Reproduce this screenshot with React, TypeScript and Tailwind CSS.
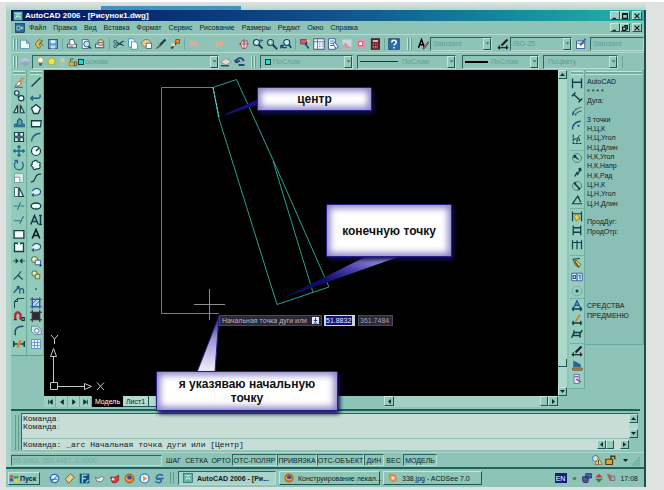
import type { ReactNode } from "react";

const K = "#123f4c";
const N = "#1d3f8c";

/* Every glyph is drawn on a 16 x 16 grid. */
const icons: Record<string, ReactNode> = {
  app: <><rect x="1" y="1" width="14" height="14" fill="#5fb3a8" stroke="#1b5a66" /><path d="M4 12 8 3l4 9M5 9h6M3 4h3M10 4h3" stroke="#e8fff8" /></>,
  doc: <><rect x="1" y="1" width="14" height="14" fill="#1f6c9a" stroke="#123" /><path d="M3 5h5v6H3zM9 8h5M11 5v6" stroke="#e8fff8" /></>,
  fresh: <path d="M2 3h8l4 4v7H2zM10 3v4h4" fill="#eafaff" stroke="#4a86b0" />,
  open: <><path d="M8 2 3 8l4 6 3-2-2-4 5-4z" fill="#f0c040" stroke="#705010" /><path d="m9 5 4 5" stroke={K} /></>,
  save: <><rect x="2" y="2" width="12" height="12" fill="#5f9fcf" stroke="#20486c" /><path d="M5 3h6v4H5z" fill="#eef" /><path d="M5 10h6v4H5z" fill="#cde" /></>,
  print: <><path d="M2 8h12v5H2z" fill="#d8dce8" stroke={K} /><path d="M5 8V2h5l2 6" fill="#fff" stroke="#446" /><path d="M4 11h5" stroke="#c33" /></>,
  preview: <><path d="M3 2h8v12H3z" fill="#fff" stroke="#357" /><circle cx="9" cy="8" r="4" fill="#bfe4f4" stroke={K} /><path d="m11 11 4 3" stroke={K} strokeWidth="2" /></>,
  publish: <><path d="M2 8h11v5H2z" fill="#d8dce8" stroke={K} /><circle cx="9" cy="6" r="4" fill="#f0c968" stroke="#755" /><path d="M5 6h8" stroke="#36a" /></>,
  cut: <><path d="m14 4-9 6M14 10 5 6" stroke={K} strokeWidth="1.6" /><circle cx="3" cy="5" r="2" stroke={K} /><circle cx="3" cy="11" r="2" stroke={K} /></>,
  copy: <><path d="M2 1h6l3 3v8H2z" fill="#eafaff" stroke="#357fb0" /><path d="M6 5h5l3 3v7H6z" fill="#fff" stroke="#357fb0" /></>,
  paste: <><ellipse cx="7" cy="7" rx="6" ry="5" fill="#e8c890" stroke="#765" /><path d="M7 7h7v7H7z" fill="#fff" stroke="#357" /></>,
  brush: <><path d="m14 2-7 7" stroke={K} strokeWidth="3" /><path d="m7 8-5 6 6-4z" fill="#d08a50" stroke="#523" /></>,
  match: <><path d="M9 2h5v5H9z" fill="#e8903c" stroke="#641" /><path d="m9 7-6 7" stroke={N} strokeWidth="2.6" /><path d="M3 7h5v4H3z" fill="#f4dc70" /></>,
  undo: <path d="M4 3v6h6M4 9c3-7 10-3 7 4" stroke="#dcae94" strokeWidth="2.6" />,
  redo: <path d="M12 3v6H6M12 9C9 2 2 6 5 13" stroke="#dcae94" strokeWidth="2.6" />,
  dot: <path d="M6 6h4l-2 3z" fill="#d6a890" />,
  pan: <><path d="M3 8 6 3l3 3 3-3 1 6-3 5H6z" fill="#f6d8d0" stroke="#853a50" /><path d="M8 1v13M1 8h13" stroke="#a02c4c" /></>,
  zoom: <><circle cx="6" cy="6" r="4" fill="#c8ecf4" stroke={K} strokeWidth="1.4" /><path d="m9 9 5 5" stroke={K} strokeWidth="2.4" /><path d="M12 1v5M10 3.500h5" stroke={N} /></>,
  zoomwin: <><circle cx="6" cy="6" r="4" fill="#fff" stroke={K} strokeWidth="1.4" /><path d="M4 4h4v4H4z" stroke="#3a6" /><path d="m9 9 4 4" stroke={K} strokeWidth="2.4" /><path d="M12 15h3v-3z" fill="#000" /></>,
  zoomprev: <><circle cx="9" cy="6" r="4" fill="#c8ecf4" stroke={K} strokeWidth="1.4" /><path d="m12 9 3 4" stroke={K} strokeWidth="2.2" /><path d="M1 10q4 5 8 2M1 10v4M1 10h4" stroke={N} strokeWidth="1.8" /></>,
  props: <><path d="M2 2h8v6H2z" fill="#d05878" stroke="#734" /><path d="m8 7 5 7M12 3l-3 6" stroke={N} strokeWidth="2" /><circle cx="12" cy="4" r="2" fill="#f0d050" /></>,
  center: <><path d="M1 1h14v14H1z" fill="#f4f6ff" stroke={K} /><path d="M6 1v14M1 5h14M8 8h2M12 8h2M8 11h2M12 11h2" stroke="#3c5c90" /></>,
  palette: <><path d="M2 1h9v14H2z" fill="#fff" stroke={N} /><path d="M4 4h5M4 7h5M4 10h5" stroke="#38a" strokeWidth="1.500" /><path d="m10 5 5 7-3 2-4-6z" fill="#e6f4ff" stroke={N} /></>,
  image: <><path d="M2 2h12v12H2z" fill="#c5dbe0" /><path d="m2 10 4-4 4 4 4 3v1H2z" fill="#d49aa6" /></>,
  markup: <><rect x="2" y="2" width="12" height="12" rx="3" fill="#dc96a8" /><path d="M5 5h5v5H5z" fill="#fff" stroke="#c2405c" /></>,
  calc: <><rect x="3" y="1" width="11" height="14" fill="#702028" stroke="#301018" /><path d="M5 3h7v2H5z" fill="#cfe" /><path d="M5 8h7M5 11h7M5 13h7" stroke="#e8b0a8" strokeDasharray="2 1" /></>,
  help: <><rect x="1" y="1" width="14" height="14" fill="#2f6cae" stroke="#123a6a" /><path d="M5 6c0-4 6-4 6 0 0 2-3 2-3 4M8 12v2" stroke="#fff" strokeWidth="2" /></>,
  astyle: <><path d="M2 13 6 2l4 11M4 9h5" stroke="#000" strokeWidth="2" /><path d="m15 5-6 7-1 3 3-2 4-6z" fill="#d09090" stroke="#622" /></>,
  dstyle: <><path d="M1 13h14M3 10v5M13 10v5" stroke="#000" strokeWidth="1.600" /><path d="m14 2-8 8" stroke="#123" strokeWidth="3" /></>,
  tstyle: <><path d="M2 4h11v10H2z" fill="#fff" stroke={N} /><path d="M2 7h11" stroke={N} /><path d="m14 1-7 9" stroke="#36a" strokeWidth="2.600" /></>,
  layers: <><path d="m1 6 7-4 7 4-7 4z" fill="#b8c4dc" /><path d="m1 10 7-4 7 4-7 4z" fill="#8fa0bc" opacity=".7" /></>,
  layprev: <><path d="m1 8 7-5 7 5-7 4z" fill="#e4d8d0" stroke="#8a8a86" /><path d="M1 13h11" stroke="#446" strokeWidth="2" /></>,
  laystate: <path d="M3 9c0-8 9-8 10-2M3 9l-2-4M3 9l5-3M6 12h8" stroke="#2b4678" strokeWidth="2.4" />,
  bulb: <><circle cx="8" cy="6" r="4" fill="#fffbe0" stroke="#b0a048" /><path d="M6 10h4v4H6z" fill="#557" /></>,
  sun: <circle cx="8" cy="8" r="5" fill="#f4e440" stroke="#a89830" />,
  sunbox: <><path d="M3 8h10v6H3z" fill="#a9c4a0" /><circle cx="8" cy="6" r="3" fill="#c8cf9a" /></>,
  lock: <><path d="M2 8h8v6H2z" fill="#d8b838" stroke="#765" /><path d="M4 8V3h5M10 8h4v6h-4z" stroke="#665a20" strokeWidth="1.500" /></>,
  erase: <><path d="m14 2-6 7" stroke="#c89c3c" strokeWidth="3.500" /><path d="m8 7-5 6h5l3-4z" fill="#fff" stroke="#b33b34" /><path d="M2 15h11" stroke={K} /></>,
  copyobj: <><circle cx="5" cy="4" r="3" fill="#d6eef2" stroke={K} strokeWidth="1.500" /><circle cx="7" cy="8" r="2" fill="#2d7fa0" /><circle cx="11" cy="11" r="3.500" fill="#fff" stroke={K} strokeWidth="1.500" /></>,
  mirror: <><path d="M6 3v10H1zM10 3v10h5z" fill="#dceee8" stroke={K} strokeWidth="1.600" /><path d="M8 1v14" stroke="#c14848" strokeDasharray="2 1" /></>,
  offset: <path d="M2 13v-3l4-1V5l3-3 3 3v4l3 1v3zM4 11h9" fill="#5a9fba" stroke="#1d5f7c" strokeWidth="1.500" />,
  array: <path d="M2 2h5v5H2zM9 2h5v5H9zM2 9h5v5H2zM9 9h5v5H9z" fill="#e9f5f1" stroke={K} strokeWidth="1.600" />,
  move: <path d="M8 1v14M1 8h14M6 3l2-2 2 2M6 13l2 2 2-2M3 6 1 8l2 2M13 6l2 2-2 2" stroke="#1d6a86" strokeWidth="1.700" />,
  rotate: <path d="M5 3a6 6 0 1 0 7 1M2 2h4v4" stroke="#1f6c8e" strokeWidth="1.700" />,
  scale: <><path d="M2 2h12v12H2z" fill="#d8e8e6" stroke="#6f9c9c" /><path d="M2 7h7v7H2z" fill="#fff" stroke="#688" /></>,
  stretch: <><path d="M2 2h5v12H2z" fill="#fff" stroke={K} /><path d="m8 2 6 12H8z" fill="#e6f4f2" stroke={K} strokeWidth="1.500" /></>,
  trim: <path d="M1 8h5M10 8h5M10 3 6 13" stroke="#2f7689" strokeWidth="1.500" />,
  extend: <path d="M1 9h9M14 3 9 13" stroke="#2f7689" strokeWidth="1.500" />,
  rect2: <path d="M1.500 3.500h13v10h-13z" fill="#f4fbfa" stroke={K} strokeWidth="1.800" />,
  brk: <><path d="M6 3H2v11h12V3h-4" fill="#f4fbfa" stroke={K} strokeWidth="1.800" /><path d="M6 2v3M10 2v3" stroke={K} /></>,
  join: <path d="M0 8h6M16 8h-6M4 5l3 3-3 3zM12 5 9 8l3 3z" stroke={K} fill={K} />,
  chamfer: <path d="m1 14 5-5 5-6M8 6v3M7 9l6 5M6 9h3" stroke="#1d5366" strokeWidth="1.500" />,
  divide: <path d="m1 13 7-8M5 5h3v3M9 14V9q3-3 5 0v5" stroke="#1c5c80" strokeWidth="1.700" />,
  corner: <path d="M2 15V6l4-4h9M6 2v4H2" stroke={K} strokeWidth="1.300" />,
  magnet: <><path d="M3 13V6q3-6 7 0v7" stroke="#b4293a" strokeWidth="3.200" /><path d="M1 13h4M12 10h3v4h-3z" stroke="#123" strokeWidth="1.500" /></>,
  fillet: <path d="M3 15V9q1-6 11-6" stroke="#1b5070" strokeWidth="2" />,
  explode: <><path d="M1 4v8M15 4v8M1 8h5M10 8h5" stroke={K} strokeWidth="2" /><path d="m10 3-4 10" stroke="#d67b28" strokeWidth="3" /></>,
  line: <path d="M2 14 14 2" stroke={K} strokeWidth="1.900" />,
  ray: <path d="M1 11h9q5 0 3-5M4 8l-3 3 3 3" stroke="#1d6380" strokeWidth="1.800" />,
  polygon: <path d="m8 2 6 5-3 7H5L2 7z" fill="#f2faf8" stroke={K} strokeWidth="1.700" />,
  rect: <path d="M2 5h13l-1 8H2z" fill="#f2faf8" stroke={K} strokeWidth="1.700" />,
  arc: <path d="M2 14Q3 4 14 3" stroke="#1d6380" strokeWidth="1.900" />,
  circle: <><circle cx="8" cy="8" r="6" fill="#eef8f6" stroke={K} strokeWidth="1.600" /><path d="m8 8 4-4" stroke={K} strokeWidth="2" /></>,
  cloud: <path d="M5 3q4-3 5 1 5 0 3 4 2 6-4 5-5 3-5-2-5-3-1-4-1-3 2-4z" fill="#f2faf8" stroke={K} strokeWidth="1.600" />,
  spline: <path d="M1 13q4 1 6-5t8-5" stroke={K} strokeWidth="1.600" />,
  ellarc: <path d="M3 7q5-7 11-1 1 6-6 6H3M5 10l-2 2 2 2" fill="#e0f0f4" stroke="#235c80" strokeWidth="1.600" />,
  ellipse: <ellipse cx="8" cy="8" rx="6.500" ry="4" fill="#eaf6f4" stroke={K} strokeWidth="1.800" />,
  atext: <path d="M1 14 6 2l5 12M3 10h6M14 2v12M12 2h4M12 14h4" stroke={K} strokeWidth="2" />,
  mtext: <path d="M3 14 8 2l5 12M5 10h6" stroke="#101c20" strokeWidth="2.200" />,
  block: <><circle cx="6" cy="6" r="4" fill="#f6ec9c" stroke={K} /><path d="M7 7h7v6H7z" fill="#e9f4ff" stroke={N} /><path d="M12 15h3v-3z" fill="#000" /></>,
  block2: <><circle cx="6" cy="6" r="3.500" fill="#f6ec9c" stroke={K} /><path d="M7 7h6v6H7z" fill="#e6e17c" stroke="#355" /></>,
  point: <path d="M7 7h2v2H7z" fill={K} />,
  hatch: <><path d="M3 3h10v10H3z" fill="#b8d8f0" stroke={N} /><path d="M3 0v16M13 0v16M0 3h16M0 13h16M3 9l6-6M5 13l8-8" stroke={N} /></>,
  gradient: <><path d="M3 3h10v10H3z" fill="#302a34" /><path d="M3 0v16M13 0v16M0 3h16M0 13h16" stroke="#382c38" strokeWidth="1.500" /></>,
  region: <><path d="M2 3h8l5 4v7H6l-4-4z" fill="#cfe2f0" stroke="#4f7894" /><circle cx="9" cy="9" r="3" fill="#fff" stroke="#357" /></>,
  table: <><path d="M2 2h12v12H2z" fill="#e3efff" stroke="#5880b8" /><path d="M2 6h12M2 10h12M6 2v12M10 2v12" stroke="#5c8ccc" /></>,
  dlin: <path d="M2 2v13M14 2v13M2 7h12" stroke={K} strokeWidth="1.800" />,
  dali: <path d="m4 5 9 8M1 7l5-5M10 15l5-5" stroke={K} strokeWidth="2" />,
  darc: <path d="M2 14Q3 5 14 3M6 14q1-5 8-6M2 10l4 3" stroke="#2e4a64" strokeDasharray="3 1" strokeWidth="1.600" />,
  dord: <><path d="M2 14Q2 4 13 3" stroke="#1d4c84" strokeWidth="1.900" /><circle cx="10" cy="9" r="1.500" fill="#1d4c84" /></>,
  djog: <path d="M3 2v12h11M3 8h5l4-5M8 8v6M11 7v5" stroke={K} strokeWidth="1.500" strokeDasharray="4 1" />,
  drad: <><circle cx="8" cy="8" r="6" stroke="#486868" /><path d="m4 5 6 5M4 5h3M4 5v3" stroke={K} strokeWidth="1.700" /></>,
  dj2: <path d="M5 14 8 9l1 2 4-8M13 3v4M13 3l-3 1" stroke={K} strokeWidth="1.800" />,
  ddia: <><circle cx="8" cy="8" r="6" stroke="#486868" /><path d="m4 4 8 8M4 4h3M12 12H9" stroke={K} strokeWidth="2.200" /></>,
  dang: <path d="M15 13H2l7-10 4 8M9 3l2 2" stroke={K} strokeWidth="1.600" />,
  dquick: <><path d="M2 2v13M14 2v13M2 5h12" stroke={K} strokeWidth="1.600" /><path d="m8 5 4 6-5 3-3-5z" fill="#f0d830" stroke="#776010" /></>,
  dbase: <path d="M3 2v13M13 2v13M3 5h10M3 11h10" stroke={K} strokeWidth="1.700" />,
  dcont: <path d="M2 3v12M8 3v12M14 3v12M2 6h12" stroke={K} strokeWidth="1.600" />,
  leader: <><path d="m3 4 5 1 5 5-3 4-4-3z" fill="#ecd030" stroke="#443" /><path d="m2 3 10-1M5 6l5 7" stroke={K} strokeWidth="1.600" /></>,
  tol: <><path d="M1 3h14v10H1z" fill="#dcecff" stroke={N} /><path d="M8 3v10M3 6h3v4H3zM12 5v6M10 6h2" stroke="#275e9c" strokeWidth="1.500" /></>,
  cmark: <><circle cx="8" cy="8" r="6.500" stroke="#7c9c8c" /><circle cx="8" cy="8" r="2" fill={K} /></>,
  dedit: <><path d="M4 10 8 1l4 9M6 7h4" stroke="#1d5c94" strokeWidth="1.900" /><path d="M1 12h14M3 9v6M13 9v6" stroke={K} strokeWidth="1.700" /></>,
  dtedit: <><path d="m12 1-6 9" stroke="#d87b30" strokeWidth="2.600" /><path d="M1 12h14M3 9v6M13 9v6" stroke={K} strokeWidth="1.700" /></>,
  dupd: <path d="M1 13 4 6h9l2-3M4 3v5M12 6v7M3 10h8" stroke={K} strokeWidth="2" />,
  solid: <><path d="M3 2 13 7v4H3z" fill="#2b6496" /><path d="M2 12h13v3H2z" fill="#aa8858" stroke="#665030" /></>,
  ucs: <><path d="M4 2h7v12H4z" fill="#e0e0f0" stroke="#568" /><path d="m7 8 6 4M5 5h5" stroke="#648" strokeWidth="1.500" /></>,
  ie: <><circle cx="8" cy="8" r="6" fill="#e8f4ff" stroke="#2b6cb4" strokeWidth="2" /><path d="M3 9h9M12 4 4 12" stroke="#2b6cb4" strokeWidth="1.500" /></>,
  desk: <path d="m9 1 6 5-8 9-5-6z" fill="#e8d090" stroke="#8c5c28" strokeWidth="1.400" />,
  photo: <><rect x="1" y="1" width="14" height="14" fill="#184c70" /><path d="M5 14V3h7M5 8h5M10 14l4-4" stroke="#7de0ec" strokeWidth="2" /></>,
  bird: <path d="m2 6 4 2 5-3 4 3-5 5-6-1z" fill="#e8ecec" stroke="#555" />,
  red: <><path d="M2 6h7l5-3v8l-4 3H5z" fill="#d03c48" stroke="#7a1c28" /><circle cx="6" cy="9" r="2" fill="#ffd0d0" /></>,
  firefox: <><circle cx="8" cy="8" r="6.500" fill="#e67820" stroke="#9c3c10" /><circle cx="8" cy="7" r="3.300" fill="#2b549c" /><path d="M3 6q1 6 8 4" stroke="#f4b03c" strokeWidth="2" /></>,
  media: <><circle cx="8" cy="8" r="6.500" fill="#e8f4ff" stroke="#2368ac" strokeWidth="1.500" /><path d="m6 4 6 4-6 4z" fill="#e8942c" /></>,
  swirl: <path d="M13 4Q7 0 4 5t5 4q4 3-1 5-5 0-6-2M5 8h9" stroke="#2968a0" strokeWidth="2.200" />,
  win: <><path d="M1 4q3-2 6 0v4Q4 6 1 8z" fill="#d4542c" /><path d="M8 4q3 2 7 0v4q-4 2-7 0z" fill="#3c9c4c" /><path d="M1 9q3-2 6 0v5q-3-2-6 0z" fill="#2c68b0" /><path d="M8 9q3 2 7 0v5q-4 2-7 0z" fill="#f0c83c" /></>,
  acd: <><path d="m3 2 8 1 3 8-6 3-6-5z" fill="#f09454" stroke="#c86838" /><circle cx="8" cy="8" r="2.500" fill="#ffe6c8" /></>,
  warn: <><circle cx="6" cy="6" r="4" fill="#d0e0f4" stroke="#357" /><path d="m10 5 5 9H5z" fill="#f4d838" stroke="#765" /><path d="M10 8v5" stroke="#222" /></>,
  unlock: <><path d="M1 7h9v7H1z" fill="#dca83c" stroke="#523c10" strokeWidth="1.500" /><path d="M8 7V3h5v4" stroke="#523c10" strokeWidth="2" /></>,
  net: <><path d="M6 1h9v7H6zM1 6h9v7H1z" fill="#5060b0" stroke="#24306c" strokeWidth="1.400" /><path d="M2 15h8" stroke="#435" strokeWidth="2" /></>,
  updown: <><path d="m8 1 6 6H2z" fill="#c83838" /><path d="m8 15 6-6H2z" fill="#28843c" /></>,
  sound: <><path d="m2 2 5 11V3z" fill="#3c9c4c" stroke="#d44" /><path d="M8 5h6v7H8z" fill="#a8a8bc" stroke="#557" /></>,
};

function Icon({ name, className = "size-3" }: { name: string; className?: string }) {
  return (
    <svg viewBox="0 0 16 16" fill="none" aria-hidden="true" className={`shrink-0 ${className}`}>
      {icons[name]}
    </svg>
  );
}

function Tool({ name }: { name: string }) {
  return (
    <button type="button" aria-label={name} className="flex w-[14px] shrink-0 items-center justify-center">
      <Icon name={name} />
    </button>
  );
}

function Tools({ names }: { names: string[] }) {
  return (
    <div className="flex h-full items-center">
      {names.map((n) => <Tool key={n} name={n} />)}
    </div>
  );
}

const raised = "border border-[#c4e6dc] border-r-[#1b5753] border-b-[#1b5753]";
const sunken = "border border-[#2c6660] border-r-[#b9ddd2] border-b-[#b9ddd2]";

const arrows = {
  up: "M2 6h5L4.500 3z",
  down: "M2 3h5L4.500 6z",
  left: "M6 2v5L3 4.500z",
  right: "M3 2v5l3-2.500z",
};

function ArrowButton({ dir, className = "size-[9px]" }: { dir: keyof typeof arrows; className?: string }) {
  return (
    <button type="button" aria-label={dir} className={`flex shrink-0 items-center justify-center bg-[#93c8ba] ${raised} ${className}`}>
      <svg viewBox="0 0 9 9" className="size-[9px] shrink-0" aria-hidden="true"><path d={arrows[dir]} fill="#0c2c30" /></svg>
    </button>
  );
}

function Grip() {
  return (
    <span className="flex h-3 shrink-0 gap-px">
      <span className="w-0.5 border-l border-[#c3e6dc] bg-[#5d9c90]" />
      <span className="w-0.5 border-l border-[#c3e6dc] bg-[#5d9c90]" />
    </span>
  );
}

function Combo({ label, value, width, pad, children }: { label: string; value: string; width: string; pad: string; children?: ReactNode }) {
  return (
    <label className={`relative flex h-[14px] shrink-0 items-center ${sunken} ${width}`}>
      <select aria-label={label} defaultValue={value} className={`h-full w-full appearance-none bg-transparent pr-2.5 text-[#5d9c94] outline-none ${pad}`}>
        <option>{value}</option>
      </select>
      <span className="pointer-events-none absolute inset-y-0 left-0.5 flex items-center">{children}</span>
      <span className={`pointer-events-none absolute inset-y-0 right-0 flex w-2 items-center justify-center bg-[#93c8ba] ${raised}`}>
        <svg viewBox="0 0 9 9" className="size-[7px] shrink-0" aria-hidden="true"><path d={arrows.down} fill="#3f7f78" /></svg>
      </span>
    </label>
  );
}

function WindowButtons({ restore = false }: { restore?: boolean }) {
  const glyphs = ["M2 8h4", restore ? "M4 2h4v4H6M2 4h4v4H2z" : "M2 2h6v6H2zM2 3h6", "m2 2 6 6M8 2 2 8"];
  return (
    <div className="flex">
      {glyphs.map((d, i) => (
        <button key={d} type="button" aria-label={["minimize", "resize", "close"][i]} className={`flex h-[9px] w-[10px] items-center justify-center bg-[#9ccdc0] ${raised} ${i === 2 ? "ml-0.5" : ""}`}>
          <svg viewBox="0 0 10 10" className="size-2 shrink-0" aria-hidden="true"><path d={d} fill="none" stroke="#06201f" strokeWidth="1.500" /></svg>
        </button>
      ))}
    </div>
  );
}

const menus = ["Файл", "Правка", "Вид", "Вставка", "Формат", "Сервис", "Рисование", "Размеры", "Редакт", "Окно", "Справка"];

const modify = ["erase", "copyobj", "mirror", "offset", "array", "move", "rotate", "scale", "stretch", "trim", "extend", "rect2", "brk", "join", "chamfer", "divide", "corner", "magnet", "fillet", "explode"];
const draw = ["line", "ray", "polygon", "rect", "arc", "circle", "cloud", "spline", "ellarc", "ellipse", "atext", "mtext", "ellarc", "block", "block2", "point", "hatch", "gradient", "region", "table"];

const dimensionGroups = [
  { gap: "mt-0", names: ["dlin", "dali", "darc", "dord", "djog"] },
  { gap: "mt-1 border-t", names: ["drad", "dj2", "ddia", "dang"] },
  { gap: "mt-px border-t", names: ["dquick", "dbase", "dcont"] },
  { gap: "mt-1 border-t", names: ["leader", "tol", "cmark"] },
  { gap: "mt-0 border-t", names: ["dedit", "dtedit", "dupd"] },
  { gap: "mt-0.5 border-t", names: ["dstyle", "solid", "ucs"] },
];

const screenMenu = [
  "AutoCAD", "* * * *", "Дуга:", "", "3 точки", "Н,Ц,К", "Н,Ц,Угол", "Н,Ц,Длин", "Н,К,Угол", "Н,К,Напр", "Н,К,Рад", "Ц,Н,К", "Ц,Н,Угол",
  "Ц,Н,Длин", "", "ПродДуг:", "ПродОтр:", "", "", "", "", "", "", "", "СРЕДСТВА", "ПРЕДМЕНЮ",
];

const modes = [
  { text: "ШАГ", width: "w-[19px]", on: false },
  { text: "СЕТКА", width: "w-[27px]", on: false },
  { text: "ОРТО", width: "w-[22px]", on: false },
  { text: "ОТС-ПОЛЯР", width: "w-[45px]", on: true },
  { text: "ПРИВЯЗКА", width: "w-[40px]", on: true },
  { text: "ОТС-ОБЪЕКТ", width: "w-[47px]", on: true },
  { text: "ДИН", width: "w-[20px]", on: true },
  { text: "ВЕС", width: "w-[19px]", on: false },
  { text: "МОДЕЛЬ", width: "w-[34px]", on: true },
];

const bubble = "absolute flex items-center justify-center rounded-xs border border-[#28208c] bg-white text-center text-[12px] leading-[14px] font-bold text-[#111] shadow-[inset_0_0_7px_3px_#8680c6,2px_3px_4px_#12104c]";

function Canvas() {
  return (
    <section aria-label="Чертёж" className="relative z-10 min-w-0 flex-1 bg-black">
      <svg viewBox="44 70 514 327" className="absolute top-0 left-0 h-[327px] w-[514px]" fill="none" aria-hidden="true">
        <defs>
          <linearGradient id="tail" x1="0" y1="0" x2="0" y2="1">
            <stop offset="0" stopColor="#1c1878" />
            <stop offset="0.4" stopColor="#9a94d4" />
            <stop offset="1" stopColor="#f4f2ff" />
          </linearGradient>
          <linearGradient id="tailUp" x1="1" y1="0" x2="0" y2="1">
            <stop offset="0" stopColor="#c4c0ec" />
            <stop offset="0.35" stopColor="#4840ac" />
            <stop offset="0.6" stopColor="#100c6c" />
          </linearGradient>
        </defs>
        <g stroke="#2a9f90">
          <path d="M219 313.500H161.500V87.500H213l23.500-8L274 162l55 125-52 17.500L218.500 117 213 87.500" />
          <path d="m273 161 40 131.500" />
        </g>
        <path d="m213 87 6 30" stroke="#5fe6cf" strokeDasharray="3 1" />
        <path d="M194 304.500h31M209.500 289v31" stroke="#8d8d8d" />
        <g stroke="#c8c8c8">
          <path d="M50.500 382.500h7v7h-7zM53.500 382v-26M50.500 356.500h6l-3-8zM58 386.500h26M84.500 383.500v6l7-3z" />
          <path d="m51 335 3.500 4 3.500-4M54.500 339v5M97 382.500l7 7.500M104 382.500l-7 7.500" />
        </g>
        <path d="m258 99-39 18 39-12z" fill="#17127c" />
        <path d="M365 257 283 298l115-41z" fill="url(#tailUp)" />
        <path d="M197 372 219 316l-4 56z" fill="url(#tail)" stroke="#28208c" />
      </svg>
      <div className={`${bubble} top-[17px] left-[213px] h-6 w-[115px]`}>центр</div>
      <div className={`${bubble} top-[134px] left-[282px] h-[53px] w-[126px]`}>конечную точку</div>
      <div className={`${bubble} top-[301px] left-[112px] h-[40px] w-[182px] px-4`}>я указяваю начальную точку</div>
      <div className="absolute top-[245px] left-[175px] flex items-center gap-0.5 text-[#b4b4c0]">
        <label htmlFor="point" className="flex h-[11px] w-[103px] items-center justify-between border border-[#4a485c] bg-[#2b2938] px-0.5">
          Начальная точка дуги или
          <svg viewBox="0 0 8 8" className="size-[7px]" aria-hidden="true"><path d="M0 0h8v8H0z" fill="#e4e8ff" /><path d="M4 1v5M2 4h4M2 7h4" stroke="#1c2c90" /></svg>
        </label>
        <span className="flex h-[11px] w-[31px] items-center bg-[#c9d8dc] pl-0.5">
          <input id="point" defaultValue="51.8832" className="h-[9px] w-[26px] bg-[#14147c] text-[#e8ecff] outline-none" />
        </span>
        <input aria-label="Y" defaultValue="361.7484" className="ml-px h-[11px] w-[35px] border border-[#4a485c] bg-[#2b2938] px-px text-[#a0a0ac] outline-none" />
      </div>
    </section>
  );
}

function Task({ icon, text, width, active = false }: { icon: string; text: string; width: string; active?: boolean }) {
  return (
    <button type="button" className={`flex h-[14px] shrink-0 items-center gap-1 px-1 whitespace-nowrap ${width} ${active ? `bg-[#a9d3c8] font-bold ${sunken}` : `bg-[#8fc6b8] ${raised}`}`}>
      <Icon name={icon} className="size-2.5" />
      {text}
    </button>
  );
}

export default function App() {
  return (
    <div className="flex min-h-screen flex-col border-t-2 border-white bg-[#e0e2e1] pr-[18px] pb-[3px] pl-1.5 font-['Liberation_Sans',Arial,sans-serif] text-[7px] leading-[9px] text-[#0c2226]">
      <div className="flex h-2 items-end bg-gradient-to-b from-[#e0e2e1] to-[#b4d6ca] pl-[95px]">
        <span className="h-1 w-[140px] bg-[#4391be]" />
      </div>
      <div className="flex flex-1 flex-col border-r-2 border-[#1c4f4c] bg-[#8ec4b7]">
        <div className="flex flex-1 flex-col border-l-5 border-[#a9d3c7]">
          <header>
            <div className="flex h-[11px] items-center gap-0.5 bg-gradient-to-r from-[#06125e] via-[#12508c] to-[#22b4a6] pr-0.5 pl-0.5 text-white">
              <Icon name="app" className="size-2.5" />
              <h1 className="flex-1 text-[8px] font-bold">AutoCAD 2006 - [Рисунок1.dwg]</h1>
              <WindowButtons />
            </div>
            <nav className="flex h-[13px] items-center pr-0.5 pl-1">
              <Icon name="doc" className="size-2.5" />
              <div className="flex flex-1 gap-[7px] pl-1">
                {menus.map((m) => <button key={m} type="button">{m}</button>)}
              </div>
              <WindowButtons restore />
            </nav>
            <div className="flex h-[18px] items-center overflow-hidden border-t border-[#b5dacf] pl-0.5">
              <Grip />
              <Tools names={["fresh", "open", "save"]} />
              <span className="mx-0.5 h-3 border-l border-[#6ba99d]" />
              <Tools names={["print", "preview", "publish"]} />
              <span className="mx-0.5 h-3 border-l border-[#6ba99d]" />
              <Tools names={["cut", "copy", "paste", "brush", "match"]} />
              <span className="mx-0.5 h-3 border-l border-[#6ba99d]" />
              <Tools names={["undo"]} />
              <Icon name="dot" className="h-3 w-[11px]" />
              <Tools names={["redo"]} />
              <Icon name="dot" className="h-3 w-[11px]" />
              <Tools names={["pan", "zoom", "zoomwin", "zoomprev"]} />
              <span className="mx-0.5 h-3 border-l border-[#6ba99d]" />
              <Tools names={["props", "center", "palette", "image", "markup", "calc"]} />
              <span className="mx-0.5 h-3 border-l border-[#6ba99d]" />
              <Tools names={["help"]} />
              <span className="mr-1 ml-1.5 flex"><Grip /></span>
              <Tool name="astyle" />
              <Combo label="Текстовый стиль" value="Standard" width="w-[62px]" pad="pl-0.5" />
              <span className="ml-1 flex"><Tool name="dstyle" /></span>
              <Combo label="Размерный стиль" value="ISO-25" width="w-[62px]" pad="pl-0.5" />
              <span className="mx-0.5 flex"><Tool name="tstyle" /></span>
              <select aria-label="Стиль таблиц" className={`h-[14px] min-w-[54px] flex-1 appearance-none pl-0.5 text-[#5d9c94] outline-none ${sunken}`}>
                <option>Standard</option>
              </select>
            </div>
            <div className="flex h-[18px] items-center border-t border-[#b5dacf] pl-0.5">
              <Grip />
              <Tool name="layers" />
              <Combo label="Слой" value="основа" width="w-[187px]" pad="pl-[52px]">
                <Icon name="bulb" className="size-[11px]" />
                <Icon name="sun" className="size-[11px]" />
                <Icon name="sunbox" className="size-[11px]" />
                <Icon name="lock" className="size-[10px]" />
                <span className="size-[6px] border border-[#0c3c3c] bg-[#19e0d4]" />
              </Combo>
              <Tool name="layprev" />
              <Tool name="laystate" />
              <span className="mx-1 flex"><Grip /></span>
              <Combo label="Цвет" value="ПоСлою" width="w-[93px]" pad="pl-3">
                <span className="ml-0.5 size-[6px] border border-[#0c3c3c] bg-[#19e0d4]" />
              </Combo>
              <span className="w-1" />
              <Combo label="Тип линии" value="ПоСлою" width="w-[99px]" pad="pl-11">
                <span className="h-px w-[38px] bg-[#123c3c]" />
              </Combo>
              <span className="w-1.5" />
              <Combo label="Вес линии" value="ПоСлою" width="w-[77px]" pad="pl-7">
                <span className="h-0.5 w-[23px] bg-black" />
              </Combo>
              <span className="w-1" />
              <Combo label="Стиль печати" value="ПоЦвету" width="w-[75px]" pad="pl-1" />
              <span className="ml-1 h-3 border-l border-[#6ba99d]" />
            </div>
          </header>

          <main className="flex flex-1 flex-col">
            <div className="flex flex-1">
              <aside className="flex h-[286px] gap-px border-b border-[#5f9f93]">
                {[modify, draw].map((column, c) => (
                  <div key={c} className="flex w-4 flex-col items-center border-r border-[#6eaca0] bg-[#93cbbb]">
                    <span className="mt-px h-1 w-3 border-y border-[#c3e6dc] bg-[#6eaca0]" />
                    <div className="grid h-[276px] auto-rows-fr">
                      {column.map((n, i) => <Tool key={i} name={n} />)}
                    </div>
                  </div>
                ))}
              </aside>
              <Canvas />
              <div className="flex w-[9px] flex-col bg-[#acd8ca]">
                <ArrowButton dir="up" />
                <span className="flex-1" />
                <span className="h-2 border-r border-b border-[#1b5753]" />
                <span className="h-5" />
                <ArrowButton dir="down" />
              </div>
              <aside className="ml-0.5 flex w-4 flex-col items-center self-start border-r border-b border-[#6eaca0] bg-[#97cdbe] pb-0.5">
                <span className="mt-px mb-px h-1 w-3 border-y border-[#c3e6dc] bg-[#6eaca0]" />
                {dimensionGroups.map((g) => (
                  <div key={g.names[0]} className={`flex flex-col border-[#74b0a4] ${g.gap}`}>
                    {g.names.map((n) => (
                      <span key={n} className="flex h-[14px] items-center"><Tool name={n} /></span>
                    ))}
                  </div>
                ))}
              </aside>
              <aside className="w-[59px] self-start border-r border-b border-[#6aa79c] bg-[#8abfb5] pb-6">
                <span className="mx-px mt-px block h-1 border-y border-[#c3e6dc] bg-[#6eaca0]" />
                <ul className="mt-0.5 grid h-[243px] auto-rows-fr pl-0.5">
                  {screenMenu.map((t, i) => (
                    <li key={i} className="flex items-center">{t && <button type="button" className="whitespace-nowrap">{t}</button>}</li>
                  ))}
                </ul>
              </aside>
            </div>
            <div className="flex h-[11px] items-stretch pr-[86px] pl-[33px]">
              {["M7 2v5L4 4.500zM3 2v5", "M6 2v5L3 4.500z", "M3 2v5l3-2.500z", "M2 2v5l3-2.500zM6 2v5"].map((d) => (
                <button key={d} type="button" aria-label="лист" className="flex w-3 items-center justify-center border-r border-[#6eaca0] bg-[#9dcfc2]">
                  <svg viewBox="0 0 9 9" className="size-2" aria-hidden="true"><path d={d} fill="#0c2c30" stroke="#0c2c30" /></svg>
                </button>
              ))}
              <button type="button" className="w-[31px] bg-black text-white">Модель</button>
              <button type="button" className="w-[26px] border-r border-b border-[#1b5753] bg-[#b4dacf]">Лист1</button>
              <button type="button" className="w-8 border-b border-[#1b5753] bg-[#b4dacf] pl-2">Лист2</button>
              <span className="flex-1" />
              <span className="flex w-[174px] items-start bg-[#a6cfc3]">
                <ArrowButton dir="left" className="size-[10px]" />
                <span className="flex-1" />
                <span className={`h-[10px] w-2 bg-[#93c8ba] ${raised}`} />
                <ArrowButton dir="right" className="size-[10px]" />
              </span>
            </div>
          </main>

          <section className="border-t border-[#8ec4b7] pt-px font-['Liberation_Mono','Courier_New',monospace] text-[8px] leading-[8px]">
            <div className="mr-1 border-t-2 border-[#1d5b58]" />
            <div className="mt-0.5 flex pr-1.5 pl-1">
              <span className="mt-0.5 mr-0.5 flex w-1 border-x border-[#5d9c90]" />
              <div className="flex-1 border-t border-l border-[#2c6660] bg-[#c8ddd6]">
                <div className="flex h-6">
                  <div className="flex-1 pt-px pl-px">
                    <p>Команда<span className="opacity-30">:</span></p>
                    <p>Команда<span className="opacity-30">:</span></p>
                  </div>
                  <div className="flex flex-col justify-between bg-[#b4d6cb]">
                    <ArrowButton dir="up" />
                    <ArrowButton dir="down" />
                  </div>
                </div>
                <div className="flex h-3 items-center border-t border-[#8fbdb0]">
                  <input aria-label="Командная строка" defaultValue="Команда: _arc Начальная точка дуги или [Центр]" className="min-w-0 flex-1 bg-transparent pl-px outline-none" />
                  <ArrowButton dir="left" />
                  <span className={`h-[9px] w-2 bg-[#93c8ba] ${raised}`} />
                  <span className="w-1.5" />
                  <ArrowButton dir="right" />
                  <span className="h-3 w-[9px] bg-[#8ec4b7]" />
                </div>
              </div>
            </div>
          </section>

          <footer className="mt-0.5 flex h-[15px] items-center border-t border-[#aed6ca] pr-0.5">
            <span className={`mr-0.5 flex h-[11px] w-[151px] items-center pl-px text-[#72aba0] ${sunken}`}>55.3363, 359.4467, 0.0000</span>
            {modes.map((m) => (
              <button key={m.text} type="button" aria-pressed={m.on} className={`h-[12px] overflow-hidden whitespace-nowrap ${m.width} ${m.on ? sunken : "border border-transparent"}`}>
                <span className="flex justify-center">{m.text}</span>
              </button>
            ))}
            <span className="flex-1" />
            <Tool name="warn" />
            <Tool name="unlock" />
            <svg viewBox="0 0 24 12" className="h-3 w-6" aria-hidden="true"><path d="M5 5h5L7.500 8z" fill="#06201f" /><path d="m14 12 8-9M17 12l5-6M20 12l2-3" stroke="#5d9c90" /></svg>
          </footer>
        </div>

        <footer className="flex h-5 items-center border-t-2 border-[#24615c] pr-1.5 pl-0.5">
          <button type="button" className={`flex h-[13px] w-[32px] items-center gap-px bg-[#93cabb] font-bold ${raised}`}>
            <Icon name="win" className="size-2.5" />
            Пуск
          </button>
          <div className="flex gap-[2px] pl-2">
            {["ie", "desk", "photo", "bird", "red", "firefox", "media", "swirl"].map((n) => (
              <button key={n} type="button" aria-label={n} className="flex w-[13px] justify-center"><Icon name={n} className="size-[11px]" /></button>
            ))}
          </div>
          <span className="mx-1 h-3 w-1 border-x border-[#5d9c90]" />
          <div className="flex gap-[3px]">
            <Task icon="app" text="AutoCAD 2006 - [Ри..." width="w-[98px]" active />
            <Task icon="firefox" text="Конструирование лекал..." width="w-[101px]" />
            <Task icon="acd" text="338.jpg - ACDSee 7.0" width="w-[99px]" />
          </div>
          <span className="flex-1" />
          <span className="flex h-2.5 w-3 items-center justify-center bg-[#16207c] text-white">EN</span>
          <span className="px-1.5">«</span>
          <div className="flex gap-0.5">
            <Icon name="net" className="size-2.5" />
            <Icon name="updown" className="size-2.5" />
            <Icon name="sound" className="size-2.5" />
          </div>
          <time className="pl-1">17:08</time>
        </footer>
      </div>
    </div>
  );
}
